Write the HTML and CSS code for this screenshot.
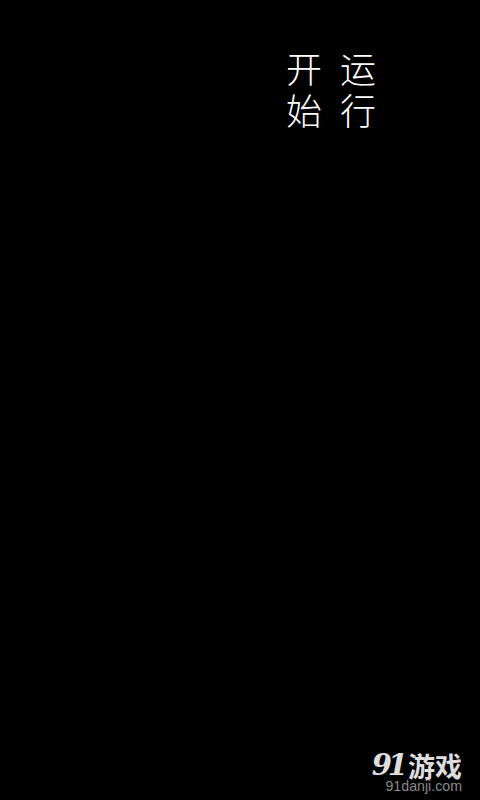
FILE: index.html
```html
<!DOCTYPE html>
<html lang="zh-CN">
<head>
    <meta charset="UTF-8">
    <meta name="viewport" content="width=device-width, initial-scale=1.0">
    <title>开始运行</title>
    <link rel="stylesheet" href="styles.css">
</head>
<body>
    <div class="screen">
        <div class="title">
            <div class="title-col">开始</div>
            <div class="title-col">运行</div>
        </div>
        <div class="watermark">
            <div class="mark-name"><span class="mark-num">91</span><span class="mark-cn">游戏</span></div>
            <div class="mark-url">91danji.com</div>
        </div>
    </div>
</body>
</html>
```

FILE: styles.css
```css
html, body {
    margin: 0;
    padding: 0;
    background-color: #000;
}
.screen {
    width: 480px;
    height: 800px;
    box-sizing: border-box;
    padding: 46px 18px 6px 0;
    display: flex;
    flex-direction: column;
    justify-content: space-between;
    overflow: hidden;
}
.title {
    display: flex;
    justify-content: flex-end;
    gap: 18px;
    padding-right: 86px;
    color: #fff;
    font-family: "Noto Sans CJK SC", sans-serif;
    font-size: 36px;
    font-weight: 300;
    line-height: 42px;
}
.title-col {
    width: 36px;
    text-align: center;
}
.watermark {
    align-self: flex-end;
    color: #ddd;
    text-align: right;
}
.mark-name {
    display: flex;
    align-items: center;
    justify-content: flex-end;
    height: 27px;
    line-height: 27px;
}
.mark-num {
    font-family: "DejaVu Serif", serif;
    font-size: 29px;
    font-weight: bold;
    font-style: italic;
    letter-spacing: -4px;
    margin-right: 4px;
}
.mark-cn {
    font-family: "Noto Sans CJK SC", sans-serif;
    font-size: 27px;
    font-weight: bold;
}
.mark-url {
    font-family: "Liberation Sans", sans-serif;
    font-size: 14.2px;
    line-height: 15px;
    color: #8a8a8a;
}
```
